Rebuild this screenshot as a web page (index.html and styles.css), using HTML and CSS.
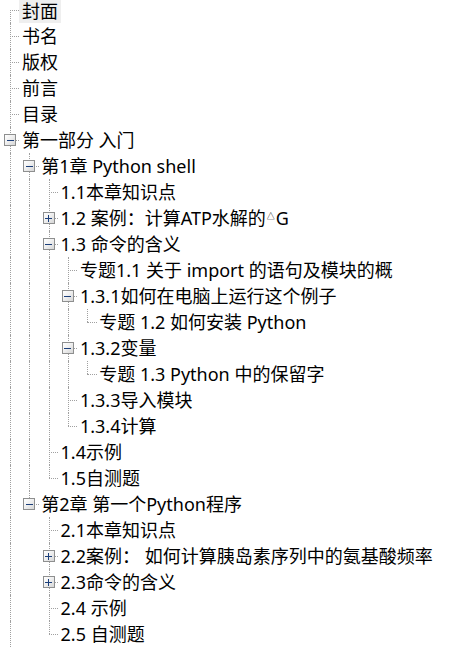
FILE: index.html
```html
<!DOCTYPE html>
<html lang="zh">
<head>
<meta charset="utf-8">
<title>目录树</title>
<link rel="stylesheet" href="styles.css">
</head>
<body>
<div class="tree">
  <div class="row top"><span class="c first"><i class="v"></i><i class="h"></i></span><span class="lbl sel">封面</span></div>
  <div class="row"><span class="c tee"><i class="v"></i><i class="h"></i></span><span class="lbl">书名</span></div>
  <div class="row"><span class="c tee"><i class="v"></i><i class="h"></i></span><span class="lbl">版权</span></div>
  <div class="row"><span class="c tee"><i class="v"></i><i class="h"></i></span><span class="lbl">前言</span></div>
  <div class="row"><span class="c tee"><i class="v"></i><i class="h"></i></span><span class="lbl">目录</span></div>
  <div class="row"><span class="c tee"><i class="v"></i><i class="h"></i><b class="box minus"></b></span><span class="lbl">第一部分 入门</span></div>

  <div class="row"><span class="c pipe"><i class="v"></i></span><span class="c tee"><i class="v"></i><i class="h"></i><b class="box minus"></b></span><span class="lbl">第1章 Python shell</span></div>
  <div class="row"><span class="c pipe"><i class="v"></i></span><span class="c pipe"><i class="v"></i></span><span class="c tee"><i class="v"></i><i class="h"></i></span><span class="lbl">1.1本章知识点</span></div>
  <div class="row"><span class="c pipe"><i class="v"></i></span><span class="c pipe"><i class="v"></i></span><span class="c tee"><i class="v"></i><i class="h"></i><b class="box plus"></b></span><span class="lbl">1.2 案例：计算ATP水解的<span class="tri">△</span>G</span></div>
  <div class="row"><span class="c pipe"><i class="v"></i></span><span class="c pipe"><i class="v"></i></span><span class="c tee"><i class="v"></i><i class="h"></i><b class="box minus"></b></span><span class="lbl">1.3 命令的含义</span></div>
  <div class="row"><span class="c pipe"><i class="v"></i></span><span class="c pipe"><i class="v"></i></span><span class="c pipe"><i class="v"></i></span><span class="c tee"><i class="v"></i><i class="h"></i></span><span class="lbl">专题1.1 关于 import 的语句及模块的概</span></div>
  <div class="row"><span class="c pipe"><i class="v"></i></span><span class="c pipe"><i class="v"></i></span><span class="c pipe"><i class="v"></i></span><span class="c tee"><i class="v"></i><i class="h"></i><b class="box minus"></b></span><span class="lbl">1.3.1如何在电脑上运行这个例子</span></div>
  <div class="row"><span class="c pipe"><i class="v"></i></span><span class="c pipe"><i class="v"></i></span><span class="c pipe"><i class="v"></i></span><span class="c pipe"><i class="v"></i></span><span class="c elbow"><i class="v"></i><i class="h"></i></span><span class="lbl">专题 1.2 如何安装 Python</span></div>
  <div class="row"><span class="c pipe"><i class="v"></i></span><span class="c pipe"><i class="v"></i></span><span class="c pipe"><i class="v"></i></span><span class="c tee"><i class="v"></i><i class="h"></i><b class="box minus"></b></span><span class="lbl">1.3.2变量</span></div>
  <div class="row"><span class="c pipe"><i class="v"></i></span><span class="c pipe"><i class="v"></i></span><span class="c pipe"><i class="v"></i></span><span class="c pipe"><i class="v"></i></span><span class="c elbow"><i class="v"></i><i class="h"></i></span><span class="lbl">专题 1.3 Python 中的保留字</span></div>
  <div class="row"><span class="c pipe"><i class="v"></i></span><span class="c pipe"><i class="v"></i></span><span class="c pipe"><i class="v"></i></span><span class="c tee"><i class="v"></i><i class="h"></i></span><span class="lbl">1.3.3导入模块</span></div>
  <div class="row"><span class="c pipe"><i class="v"></i></span><span class="c pipe"><i class="v"></i></span><span class="c pipe"><i class="v"></i></span><span class="c elbow"><i class="v"></i><i class="h"></i></span><span class="lbl">1.3.4计算</span></div>
  <div class="row"><span class="c pipe"><i class="v"></i></span><span class="c pipe"><i class="v"></i></span><span class="c tee"><i class="v"></i><i class="h"></i></span><span class="lbl">1.4示例</span></div>
  <div class="row"><span class="c pipe"><i class="v"></i></span><span class="c pipe"><i class="v"></i></span><span class="c elbow"><i class="v"></i><i class="h"></i></span><span class="lbl">1.5自测题</span></div>

  <div class="row"><span class="c pipe"><i class="v"></i></span><span class="c elbow"><i class="v"></i><i class="h"></i><b class="box minus"></b></span><span class="lbl">第2章 第一个Python程序</span></div>
  <div class="row"><span class="c pipe"><i class="v"></i></span><span class="c blank"></span><span class="c tee"><i class="v"></i><i class="h"></i></span><span class="lbl">2.1本章知识点</span></div>
  <div class="row"><span class="c pipe"><i class="v"></i></span><span class="c blank"></span><span class="c tee"><i class="v"></i><i class="h"></i><b class="box plus"></b></span><span class="lbl">2.2案例： 如何计算胰岛素序列中的氨基酸频率</span></div>
  <div class="row"><span class="c pipe"><i class="v"></i></span><span class="c blank"></span><span class="c tee"><i class="v"></i><i class="h"></i><b class="box plus"></b></span><span class="lbl">2.3命令的含义</span></div>
  <div class="row"><span class="c pipe"><i class="v"></i></span><span class="c blank"></span><span class="c tee"><i class="v"></i><i class="h"></i></span><span class="lbl">2.4 示例</span></div>
  <div class="row"><span class="c pipe"><i class="v"></i></span><span class="c blank"></span><span class="c elbow"><i class="v"></i><i class="h"></i></span><span class="lbl">2.5 自测题</span></div>
</div>
</body>
</html>
```

FILE: styles.css
```css
html, body {
  margin: 0;
  padding: 0;
  background: #ffffff;
  overflow: hidden;
}

.tree {
  font-family: "Noto Sans", "Noto Sans CJK SC", sans-serif;
  font-size: 18px;
  color: #000000;
}

.row {
  display: flex;
  height: 26px;
  align-items: stretch;
}

.c {
  flex: none;
  width: 19.33px;
  height: 26px;
  display: grid;
  grid-template-columns: 10px 1fr;
  grid-template-rows: 13px 13px;
}

.row.top {
  height: 23px;
}

.row.top .c {
  height: 23px;
  grid-template-rows: 10px 13px;
}

.row.top .lbl {
  line-height: 21px;
  padding-bottom: 0;
}

.c i {
  display: block;
  grid-column: 2;
}

.c .v {
  grid-row: 1 / 3;
  border-left: 1px dotted #a0a0a0;
}

.c .h {
  grid-row: 2;
  border-top: 1px dotted #a0a0a0;
}

.elbow .v {
  grid-row: 1;
}

.first .v {
  grid-row: 2;
}

.box {
  grid-column: 1 / 3;
  grid-row: 1 / 3;
  align-self: start;
  justify-self: start;
  box-sizing: border-box;
  width: 12px;
  height: 12px;
  margin: 7px 0 0 4px;
  border: 1px solid #8e8f8f;
  background: linear-gradient(135deg, #ffffff 0%, #f0f0f0 45%, #d6d6d6 100%);
  display: flex;
  align-items: center;
  justify-content: center;
  position: relative;
}

.box::before {
  content: "";
  display: block;
  width: 7px;
  height: 1px;
  background: #1c3f7a;
}

.plus::after {
  content: "";
  position: absolute;
  left: 4.5px;
  top: 1.5px;
  width: 1px;
  height: 7px;
  background: #1c3f7a;
}

.lbl {
  display: flex;
  align-items: center;
  white-space: nowrap;
  padding: 0 3px 0 2.6px;
  line-height: 26px;
}

.sel {
  background: #efefef;
}

.tri {
  font-size: 8px;
  line-height: 1;
  margin: 0 1px 4px 1px;
  align-self: center;
  color: #000;
}
```
